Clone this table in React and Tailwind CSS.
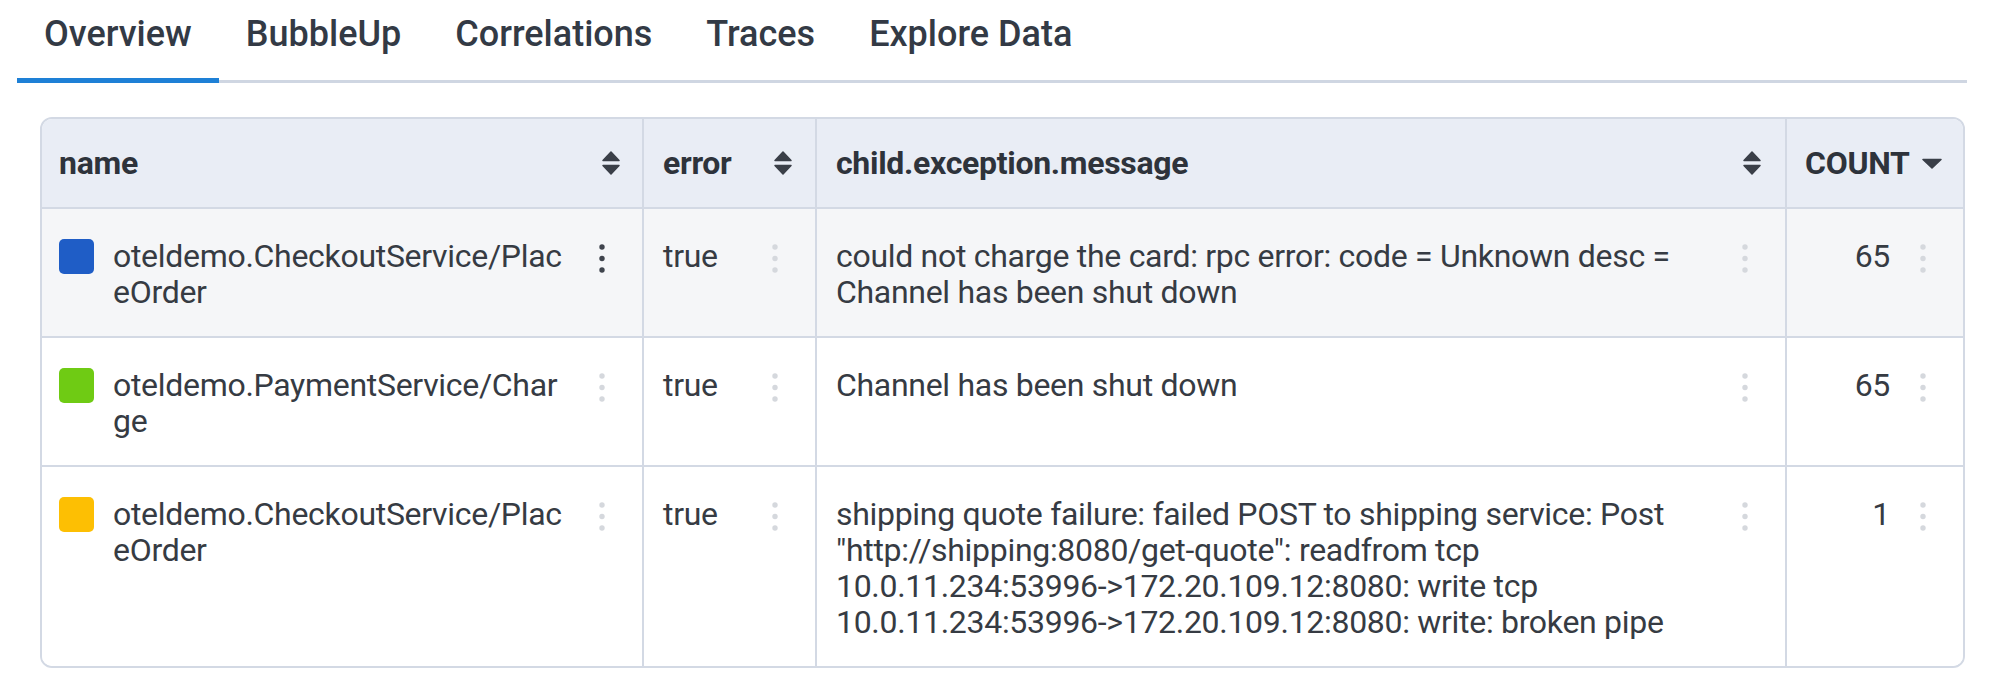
import React from 'react';

const tabs = ['Overview', 'BubbleUp', 'Correlations', 'Traces', 'Explore Data'];

const rows = [
  {
    swatch: 'bg-[#1f5dc6]',
    name: 'oteldemo.CheckoutService/PlaceOrder',
    error: 'true',
    message: 'could not charge the card: rpc error: code = Unknown desc = Channel has been shut down',
    count: 65,
    hover: true,
  },
  {
    swatch: 'bg-[#6fcb14]',
    name: 'oteldemo.PaymentService/Charge',
    error: 'true',
    message: 'Channel has been shut down',
    count: 65,
  },
  {
    swatch: 'bg-[#fdbf03]',
    name: 'oteldemo.CheckoutService/PlaceOrder',
    error: 'true',
    message:
      'shipping quote failure: failed POST to shipping service: Post "http://shipping:8080/get-quote": readfrom tcp 10.0.11.234:53996->172.20.109.12:8080: write tcp 10.0.11.234:53996->172.20.109.12:8080: write: broken pipe',
    count: 1,
  },
];

function SortIcon() {
  return (
    <svg width="20" height="26" viewBox="0 0 20 26" className="shrink-0 text-[#3a3f48]">
      <polygon points="10,2 18,10.5 2,10.5" fill="currentColor" stroke="currentColor" strokeWidth="1.5" strokeLinejoin="round" />
      <polygon points="2,15.5 18,15.5 10,24" fill="currentColor" stroke="currentColor" strokeWidth="1.5" strokeLinejoin="round" />
    </svg>
  );
}

function Kebab({ dark }) {
  return (
    <div className="w-[20px] h-[36px] shrink-0 flex items-center justify-center pt-[4px]">
      <svg width="6" height="29" viewBox="0 0 6 29" className={dark ? 'text-[#3f444d]' : 'text-[#d5d8dd]'}>
        <circle cx="3" cy="3" r="2.7" fill="currentColor" />
        <circle cx="3" cy="14.5" r="2.7" fill="currentColor" />
        <circle cx="3" cy="26" r="2.7" fill="currentColor" />
      </svg>
    </div>
  );
}

export default function App() {
  return (
    <div className="w-full min-h-screen bg-white pl-[17px] pr-[32px] font-['Roboto','Liberation_Sans',sans-serif] antialiased">
      {/* TABS */}
      <div className="flex border-b-[3px] border-[#cfd6e2]">
        {tabs.map((t, i) => (
          <div
            key={t}
            className={`px-[27px] pt-[12px] pb-[22px] -mb-[3px] border-b-[5px] text-[36px] leading-[44px] font-medium text-[#333a45] ${
              i === 0 ? 'border-[#1e80d6]' : 'border-transparent'
            }`}
          >
            {t}
          </div>
        ))}
      </div>

      {/* TABLE */}
      <div className="ml-[23px] mr-[2px] mt-[34px] rounded-[12px] border-2 border-[#d3d9e4] overflow-hidden text-[32px] tracking-[-0.3px] leading-[36px] text-[#363b43]">
        {/* HEADER */}
        <div className="flex h-[90px] bg-[#e9edf5] border-b-2 border-[#d3d9e4] font-bold text-[#2e333b]">
          <div className="w-[602px] shrink-0 border-r-2 border-[#d3d9e4] flex items-center justify-between pl-[17px] pr-[21px]">
            <span>name</span>
            <SortIcon />
          </div>
          <div className="w-[173px] shrink-0 border-r-2 border-[#d3d9e4] flex items-center justify-between pl-[19px] pr-[22px]">
            <span>error</span>
            <SortIcon />
          </div>
          <div className="w-[970px] shrink-0 border-r-2 border-[#d3d9e4] flex items-center justify-between pl-[19px] pr-[23px]">
            <span>child.exception.message</span>
            <SortIcon />
          </div>
          <div className="flex-1 flex items-center gap-[11px] pl-[18px]">
            <span>COUNT</span>
            <svg width="22" height="11" viewBox="0 0 22 11" className="text-[#3a3f48]">
              <polygon points="2,1.5 20,1.5 11,10" fill="currentColor" stroke="currentColor" strokeWidth="1.5" strokeLinejoin="round" />
            </svg>
          </div>
        </div>

        {/* BODY */}
        {rows.map((r, idx) => (
          <div
            key={idx}
            className={`flex ${r.hover ? 'bg-[#f5f6f8]' : 'bg-white'} ${idx < rows.length - 1 ? 'border-b-2 border-[#d3d9e4]' : ''}`}
          >
            <div className="w-[602px] shrink-0 border-r-2 border-[#d3d9e4] flex items-start pl-[17px] pr-[30px] pt-[29px] pb-[26px]">
              <div className={`w-[35px] h-[35px] mt-[1px] rounded-[5px] shrink-0 ${r.swatch}`} />
              <div className="flex-1 ml-[19px] mr-[24px] break-all">{r.name}</div>
              <Kebab dark={r.hover} />
            </div>
            <div className="w-[173px] shrink-0 border-r-2 border-[#d3d9e4] flex items-start pl-[19px] pr-[30px] pt-[29px] pb-[26px]">
              <div className="flex-1">{r.error}</div>
              <Kebab />
            </div>
            <div className="w-[970px] shrink-0 border-r-2 border-[#d3d9e4] flex items-start pl-[19px] pr-[30px] pt-[29px] pb-[26px]">
              <div className="flex-1 mr-[24px]">{r.message}</div>
              <Kebab />
            </div>
            <div className="flex-1 flex items-start pl-[18px] pr-[30px] pt-[29px] pb-[26px]">
              <div className="flex-1 text-right mr-[23px]">{r.count}</div>
              <Kebab />
            </div>
          </div>
        ))}
      </div>
    </div>
  );
}
